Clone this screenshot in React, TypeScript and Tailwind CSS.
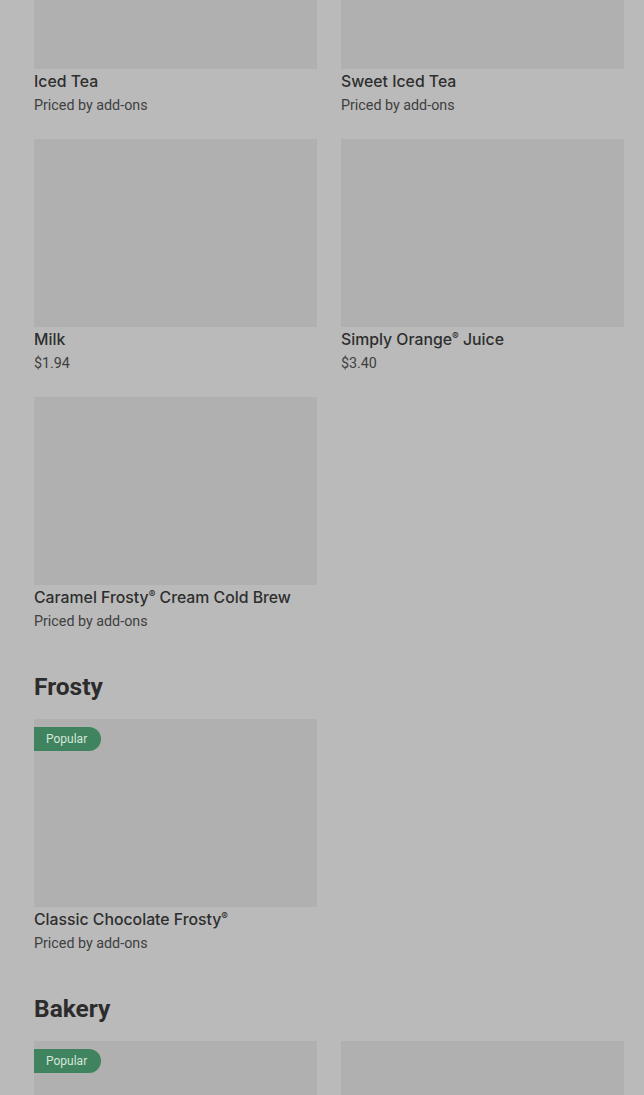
const sections = [
  {
    title: null as string | null,
    items: [
      { name: 'Iced Tea', price: 'Priced by add-ons' },
      { name: 'Sweet Iced Tea', price: 'Priced by add-ons' },
      { name: 'Milk', price: '$1.94' },
      { name: 'Simply Orange® Juice', price: '$3.40' },
      { name: 'Caramel Frosty® Cream Cold Brew', price: 'Priced by add-ons' },
    ],
  },
  {
    title: 'Frosty',
    items: [{ name: 'Classic Chocolate Frosty®', price: 'Priced by add-ons', popular: true }],
  },
  {
    title: 'Bakery',
    // only the tops of these images are on screen
    items: [
      { name: '', price: '', popular: true },
      { name: '', price: '' },
    ],
  },
]

type Item = { name: string; price: string; popular?: boolean }

// small raised ® like the reference
function Name({ text }: { text: string }) {
  const parts = text.split('®')
  return (
    <>
      {parts.map((p, i) => (
        <span key={i}>
          {p}
          {i < parts.length - 1 && (
            <span className="relative -top-[5px] text-[10px] leading-[0]">®</span>
          )}
        </span>
      ))}
    </>
  )
}

function ItemCard({ item }: { item: Item }) {
  return (
    <div className="flex flex-col">
      <div className="relative h-[188px] bg-[#b0b0b0]">
        {item.popular && (
          <span className="absolute left-0 top-2 flex h-6 items-center rounded-r-full bg-[#3f845f] pl-3 pr-[14px] text-[12px] text-[#d6e6db]">
            Popular
          </span>
        )}
      </div>
      {item.name && (
        <>
          <div
            className="mt-[2px] h-[22px] text-[15.8px] font-medium leading-[22px] text-[#2e2e2e]"
            style={{ fontFamily: 'Inter, Roboto, sans-serif' }}
          >
            <Name text={item.name} />
          </div>
          <div className="mt-[2px] text-[14.3px] leading-[20px] text-[#404040]">
            {item.price}
          </div>
        </>
      )}
    </div>
  )
}

export default function App() {
  return (
    <div
      className="h-[1095px] overflow-hidden bg-[#bababa]"
      style={{ fontFamily: 'Roboto, "Liberation Sans", sans-serif' }}
    >
      <div className="-mt-[119px] pl-[34px] pr-[20px]">
        {sections.map((section, i) => (
          <div key={i}>
            {section.title && (
              <h2 className="mt-10 mb-4 text-[24.5px] font-bold leading-8 text-[#2c2c2c]">
                {section.title}
              </h2>
            )}
            <div className="grid grid-cols-2 gap-x-6 gap-y-6">
              {section.items.map((item, j) => (
                <ItemCard key={j} item={item} />
              ))}
            </div>
          </div>
        ))}
      </div>
    </div>
  )
}
